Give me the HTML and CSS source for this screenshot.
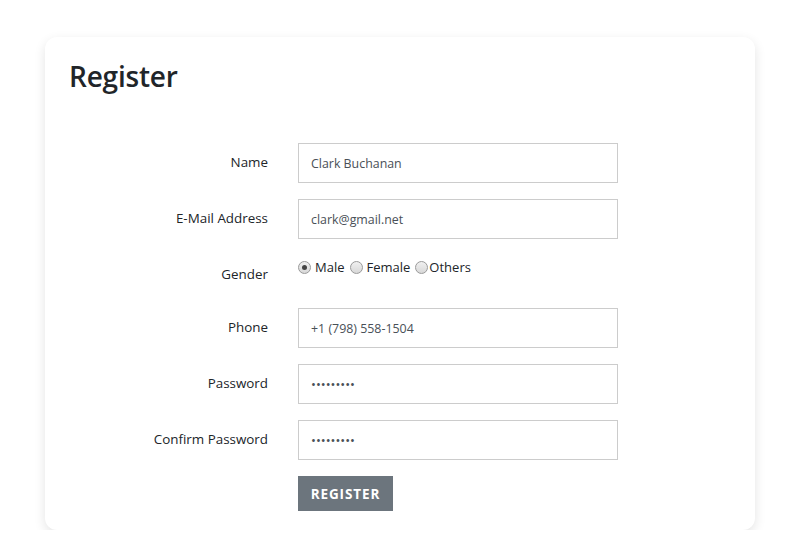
FILE: index.html
```html
<!DOCTYPE html>
<html>
<head>
<meta charset="utf-8">
<link rel="stylesheet" href="styles.css">
</head>
<body>
<div class="card">
  <h1 class="title">Register</h1>
  <form class="form">
    <label class="label">Name</label>
    <div class="control"><input class="input" type="text" value="Clark Buchanan"></div>

    <label class="label">E-Mail Address</label>
    <div class="control"><input class="input" type="text" value="clark@gmail.net"></div>

    <label class="label label-gender">Gender</label>
    <div class="control radios">
      <input class="radio" type="radio" name="g" checked><span class="rlabel">Male</span>
      <input class="radio" type="radio" name="g"><span class="rlabel">Female</span>
      <input class="radio tight" type="radio" name="g"><span class="rlabel">Others</span>
    </div>

    <label class="label">Phone</label>
    <div class="control"><input class="input" type="text" value="+1 (798) 558-1504"></div>

    <label class="label">Password</label>
    <div class="control"><input class="input pw" type="password" value="123456789"></div>

    <label class="label">Confirm Password</label>
    <div class="control"><input class="input pw" type="password" value="123456789"></div>

    <span></span>
    <div class="control"><button class="btn" type="button">Register</button></div>
  </form>
</div>
</body>
</html>
```

FILE: styles.css
```css
* { box-sizing: border-box; }
html, body { margin: 0; padding: 0; background: #ffffff; }
body {
  font-family: "Open Sans", "Noto Sans", sans-serif;
  color: #212529;
  padding-top: 37px;
}
.card {
  margin-left: 45px;
  width: 710px;
  height: 493px;
  background: #fff;
  border-radius: 12px;
  box-shadow: 0 4px 12px rgba(0, 0, 0, 0.11);
  padding: 20px 24px 19px 24px;
}
.title {
  margin: 0;
  font-size: 28px;
  font-weight: 600;
  line-height: 38px;
  color: #212529;
  letter-spacing: -0.2px;
}
.form {
  margin-top: 48px;
  display: grid;
  grid-template-columns: 199px 320px;
  column-gap: 30px;
  row-gap: 16px;
  align-items: center;
}
.label {
  text-align: right;
  font-size: 13.4px;
  color: #212529;
  padding-bottom: 2px;
}
.label-gender { padding-bottom: 0; }
.input {
  display: block;
  width: 320px;
  height: 40px;
  border: 1px solid #cccccc;
  border-radius: 0;
  padding: 0 12px;
  font-family: "Open Sans", "Noto Sans", sans-serif;
  font-size: 12.4px;
  color: #495057;
  outline: none;
  background: #fff;
}
.pw { font-size: 13px; letter-spacing: 0; }
.radios {
  height: 37px;
  display: flex;
  align-items: flex-start;
  padding-top: 3px;
  font-size: 13px;
  color: #212529;
}
.radio {
  appearance: none;
  -webkit-appearance: none;
  width: 13px;
  height: 13px;
  margin: 3px 4px 0 0;
  border: 1px solid #9a9a9a;
  border-radius: 50%;
  background: linear-gradient(#f0f0f0, #d8d8d8);
  position: relative;
  flex: none;
}
.radio:checked::after {
  content: "";
  position: absolute;
  left: 3px;
  top: 3px;
  width: 5px;
  height: 5px;
  border-radius: 50%;
  background: #444;
}
.rlabel { margin-right: 5px; line-height: 19px; }
.radio.tight { margin-right: 1px; }
.btn {
  display: block;
  width: 95px;
  height: 35px;
  border: none;
  border-radius: 0;
  background: #6c757d;
  color: #fff;
  font-family: "Open Sans", "Noto Sans", sans-serif;
  font-weight: 700;
  font-size: 13.5px;
  text-transform: uppercase;
  letter-spacing: 0.9px;
  padding: 0;
}
```
